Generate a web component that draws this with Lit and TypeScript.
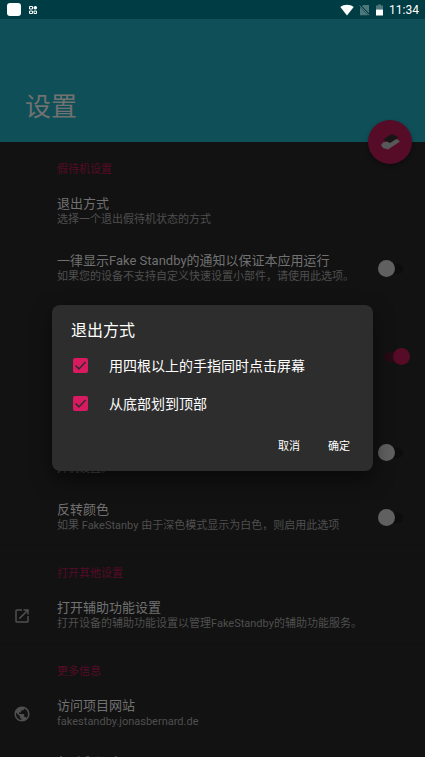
import { LitElement, html, css, svg, nothing } from "lit";
import { customElement, property } from "lit/decorators.js";

const openIcon = svg`<path d="M19 19H5V5h7V3H5a2 2 0 0 0-2 2v14a2 2 0 0 0 2 2h14c1.100 0 2-.9 2-2v-7h-2v7zM14 3v2h3.590l-9.830 9.830 1.410 1.410L19 6.410V10h2V3h-7z"/>`;
const globeIcon = svg`<path d="M12 2C6.480 2 2 6.480 2 12s4.480 10 10 10 10-4.480 10-10S17.520 2 12 2zm-1 17.930c-3.950-.49-7-3.850-7-7.930 0-.62.080-1.210.210-1.790L9 15v1c0 1.100.9 2 2 2v1.930zm6.900-2.540c-.26-.81-1-1.390-1.900-1.390h-1v-3c0-.55-.45-1-1-1H8v-2h2c.55 0 1-.45 1-1V7h2c1.100 0 2-.9 2-2v-.41c2.930 1.190 5 4.060 5 7.410 0 2.080-.8 3.970-2.100 5.390z"/>`;

@customElement("status-bar")
class StatusBar extends LitElement {
  static styles = css`
    :host { display: flex; align-items: center; height: 19px; padding: 0 6px 0 7px; background: #003c43; color: #fff; font: 400 12px/19px Roboto, sans-serif; }
    .app { width: 14px; height: 13px; border-radius: 3px; background: #fff; margin-right: 7px; }
    .grow { flex: 1; }
    svg { display: block; }
    .wifi { margin-right: 5px; }
    .sim { margin-right: 6px; }
    .battery { margin-right: 6px; }
    time { padding-top: 1px; line-height: 18px; }
  `;
  render() {
    return html`
      <span class="app"></span>
      <svg width="10" height="10" viewBox="0 0 10 10" fill="none" stroke="#fff">
        <path d="M1.500 1.500h3v2.500h-3zM1.500 6h3v2.500h-3zM6 6h2.500v2.500H6z"/><circle cx="7.300" cy="2.700" r="1.800" fill="#fff" stroke="none"/>
      </svg>
      <span class="grow"></span>
      <svg class="wifi" width="14" height="12" viewBox="0 0 14 12" fill="#fff"><path d="M7 11.500L.3 3.100C2.200 1.500 4.500.7 7 .7s4.800.8 6.700 2.400z"/></svg>
      <svg class="sim" width="11" height="12" viewBox="0 0 11 12"><path d="M4.200 1H10v8.300L3 2.200zM1 3l8.300 8.200H1z" fill="#4d777b"/><path d="M.5 1.500l9.800 9.800" stroke="#4d777b"/></svg>
      <svg class="battery" width="7" height="12" viewBox="0 0 7 12"><path d="M0 1.500h2V.5h3v1h2v4H0z" fill="#4d777b"/><path d="M0 5.500h7v6H0z" fill="#fff"/></svg>
      <time>11:34</time>`;
  }
}

@customElement("setting-row")
class SettingRow extends LitElement {
  @property() heading = "";
  @property() summary = "";
  @property() icon = "";
  @property() toggle = "";
  static styles = css`
    :host { display: block; }
    .row { display: grid; grid-template-columns: 57px minmax(0, 1fr) 53px; align-items: center; box-sizing: border-box; min-height: 57px; padding: 12px 0; width: 100%; border: 0; background: none; font: inherit; text-align: left; text-decoration: none; color: #717171; }
    .icon { padding-left: 13px; line-height: 0; fill: #4f4f4f; }
    .text { display: block; grid-column: 2; padding-top: 1px; }
    .title { display: block; font-size: 13px; line-height: 16px; white-space: nowrap; }
    .summary { display: block; font-size: 11px; line-height: 16px; color: #4f4f4f; white-space: pre; }
    .switch { appearance: none; grid-column: 3; position: relative; margin: 0 0 0 6px; width: 26px; height: 18px; }
    .switch::before { content: ""; position: absolute; inset: 4px 1px 4px 6px; border-radius: 6px; background: #0d0d0d; }
    .switch::after { content: ""; position: absolute; left: 0; top: 0; width: 17px; height: 17px; border-radius: 50%; background: #606060; }
    .switch:checked { width: 32px; }
    .switch:checked::before { background: #260a14; }
    .switch:checked::after { left: auto; right: 0; background: #560b26; }
  `;
  render() {
    const text = html`<span class="text"><span class="title">${this.heading}</span>${this.summary ? html`<span class="summary">${this.summary}</span>` : nothing}</span>`;
    if (this.toggle) return html`<label class="row">${text}<input class="switch" type="checkbox" ?checked=${this.toggle === "on"}></label>`;
    if (this.icon) return html`<a class="row" href="#"><span class="icon"><svg width="18" height="18" viewBox="0 0 24 24">${this.icon === "globe" ? globeIcon : openIcon}</svg></span>${text}</a>`;
    return html`<button class="row">${text}</button>`;
  }
}

@customElement("app-root")
class AppRoot extends LitElement {
  static styles = css`
    :host { display: flex; flex-direction: column; position: relative; height: 100vh; overflow: hidden; background: #121212; font-family: Roboto, "Noto Sans CJK SC", sans-serif; }
    status-bar, header { flex: none; }
    header { position: relative; display: flex; align-items: flex-end; box-sizing: border-box; height: 123px; padding: 0 25px 16px; background: #0f4f57; }
    h1 { margin: 0; font-size: 26px; line-height: 38px; font-weight: 400; color: #717171; }
    .fab { position: absolute; right: 13px; bottom: -22px; width: 44px; height: 44px; padding: 0; border: 0; border-radius: 50%; background: #560b26; box-shadow: 0 2px 4px #0005; display: grid; place-items: center; }
    main { flex: 1; min-height: 0; overflow: hidden; }
    h2 { margin: 0; padding: 20px 0 5px 57px; font-size: 11px; line-height: 16px; font-weight: 400; color: #560b26; }
    .group + .group { box-shadow: 0 -1px #101010; }
    .tall { padding: 31px 0; }
    .overlay { position: absolute; inset: 19px 0 0; display: grid; place-items: center; }
    .dialog { box-sizing: border-box; width: calc(100% - 104px); padding: 12px; border-radius: 8px; background: #2d2d2d; color: #fff; box-shadow: 0 8px 20px #0008; }
    .dialog h3 { margin: 0 7px 2px; font-size: 16px; line-height: 27px; font-weight: 400; }
    .choice { display: flex; align-items: center; gap: 21px; height: 38px; padding-left: 9px; font-size: 14px; }
    .box { appearance: none; margin: 0; width: 15px; height: 15px; border-radius: 2px; background: #d81b60; }
    .tick { display: grid; line-height: 0; }
    .tick > * { grid-area: 1 / 1; }
    .tick svg { pointer-events: none; }
    .actions { display: flex; justify-content: flex-end; gap: 6px; padding-top: 12px; }
    .actions button { height: 25px; padding: 0 11px; border: 0; background: none; color: #fff; font: 400 11px/25px Roboto, "Noto Sans CJK SC", sans-serif; }
  `;
  choice(label: string) {
    return html`<label class="choice"><span class="tick"><input class="box" type="checkbox" checked><svg width="15" height="15" viewBox="0 0 15 15" fill="none" stroke="#2d2d2d" stroke-width="1.500"><path d="M2.500 7.500l3.400 3.400 6.700-6.900"/></svg></span>${label}</label>`;
  }
  render() {
    return html`
      <status-bar></status-bar>
      <header>
        <h1>设置</h1>
        <button class="fab" aria-label="待机">
          <svg width="20" height="18" viewBox="0 0 20 18"><path d="M1 12l2-2.500L17 6l3 2.500-12 8L3 15z" fill="#585858"/><path d="M3 6.500L12 1l6.500 3.500L10 10z" fill="#161616"/></svg>
        </button>
      </header>
      <main>
        <section class="group">
          <h2>假待机设置</h2>
          <setting-row heading="退出方式" summary="选择一个退出假待机状态的方式"></setting-row>
          <setting-row heading="一律显示Fake Standby的通知以保证本应用运行" summary="如果您的设备不支持自定义快速设置小部件，请使用此选项。" toggle="off"></setting-row>
          <setting-row class="tall" heading="通知" toggle="on"></setting-row>
          <setting-row heading="开机启动" summary=${"在设备启动后显示通知\n开机设置。"} toggle="off"></setting-row>
          <setting-row heading="反转颜色" summary="如果 FakeStanby 由于深色模式显示为白色，则启用此选项" toggle="off"></setting-row>
        </section>
        <section class="group">
          <h2>打开其他设置</h2>
          <setting-row icon="open" heading="打开辅助功能设置" summary="打开设备的辅助功能设置以管理FakeStandby的辅助功能服务。"></setting-row>
        </section>
        <section class="group">
          <h2>更多信息</h2>
          <setting-row icon="globe" heading="访问项目网站" summary="fakestandby.jonasbernard.de"></setting-row>
          <setting-row heading="帮助翻译应用" summary="fakestandby.jonasbernard.de"></setting-row>
        </section>
      </main>
      <div class="overlay">
        <div class="dialog" role="dialog" aria-modal="true" aria-labelledby="dialog-title">
          <h3 id="dialog-title">退出方式</h3>
          ${this.choice("用四根以上的手指同时点击屏幕")}
          ${this.choice("从底部划到顶部")}
          <div class="actions"><button>取消</button><button>确定</button></div>
        </div>
      </div>`;
  }
}
